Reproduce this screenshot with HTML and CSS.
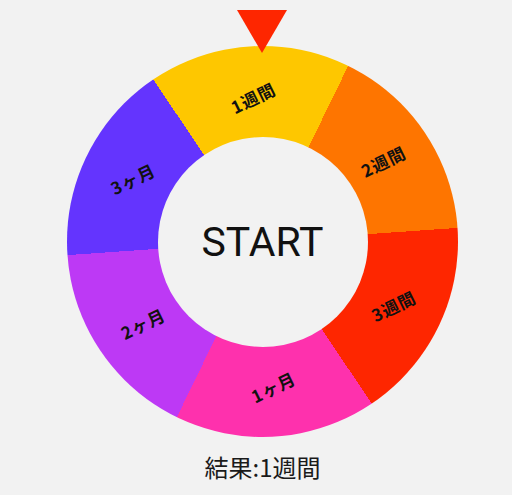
FILE: index.html
```html
<!DOCTYPE html>
<html lang="ja">
<head>
  <meta charset="UTF-8">
  <meta name="viewport" content="width=device-width, initial-scale=1.0">
  <title>ルーレット</title>
  <!-- スタイル -->
  <link rel="stylesheet" href="styles.css">
</head>
<body>
  <main class="app">
    <!-- ルーレット本体 -->
    <div class="roulette">
      <div class="pointer"></div>
      <div class="wheel">
        <span class="label" style="--a: -4deg">1週間</span>
        <span class="label" style="--a: 56deg">2週間</span>
        <span class="label" style="--a: 116deg">3週間</span>
        <span class="label" style="--a: 176deg">1ヶ月</span>
        <span class="label" style="--a: 236deg">2ヶ月</span>
        <span class="label" style="--a: 296deg">3ヶ月</span>
        <button class="hub" type="button">START</button>
      </div>
    </div>

    <p class="result">結果:1週間</p>
  </main>
</body>
</html>
```

FILE: styles.css
```css
/* 全体 */
body {
  margin: 0;
  background-color: #f2f2f2;
  font-family: Roboto, "Noto Sans CJK JP", sans-serif;
  color: #111;
}

.app {
  display: flex;
  flex-direction: column;
  align-items: center;
  padding: 46px 0 0 13px;
}

/* ルーレット */
.roulette {
  position: relative;
  width: 391px;
  height: 391px;
}

.pointer {
  position: absolute;
  top: -36px;
  left: 170px;
  width: 0;
  height: 0;
  border-left: 25px solid transparent;
  border-right: 25px solid transparent;
  border-top: 43px solid #fe2600;
  z-index: 2;
}

.wheel {
  position: relative;
  width: 100%;
  height: 100%;
  border-radius: 50%;
  display: flex;
  align-items: center;
  justify-content: center;
  background: conic-gradient(
    from -34deg,
    #fec700 0deg 60deg,
    #fe7500 60deg 120deg,
    #fe2600 120deg 180deg,
    #fe31ad 180deg 240deg,
    #bd39f5 240deg 300deg,
    #6434fe 300deg 360deg
  );
}

.label {
  position: absolute;
  left: 50%;
  top: 50%;
  font-family: "Noto Sans CJK JP", sans-serif;
  font-size: 17px;
  font-weight: 700;
  letter-spacing: 1px;
  white-space: nowrap;
  transform: translate(-50%, -50%) rotate(var(--a)) translateY(-145px) rotate(calc(-1 * var(--a) - 26deg));
}

.hub {
  width: 210px;
  height: 210px;
  border: none;
  border-radius: 50%;
  background-color: #f2f2f2;
  font-family: Roboto, sans-serif;
  font-size: 41px;
  color: #111;
  padding: 0;
  cursor: pointer;
}

/* 結果 */
.result {
  margin: 13px 0 0;
  font-family: "Noto Sans CJK JP", sans-serif;
  font-size: 24px;
  line-height: 34px;
  color: #1a1a1a;
}
```
